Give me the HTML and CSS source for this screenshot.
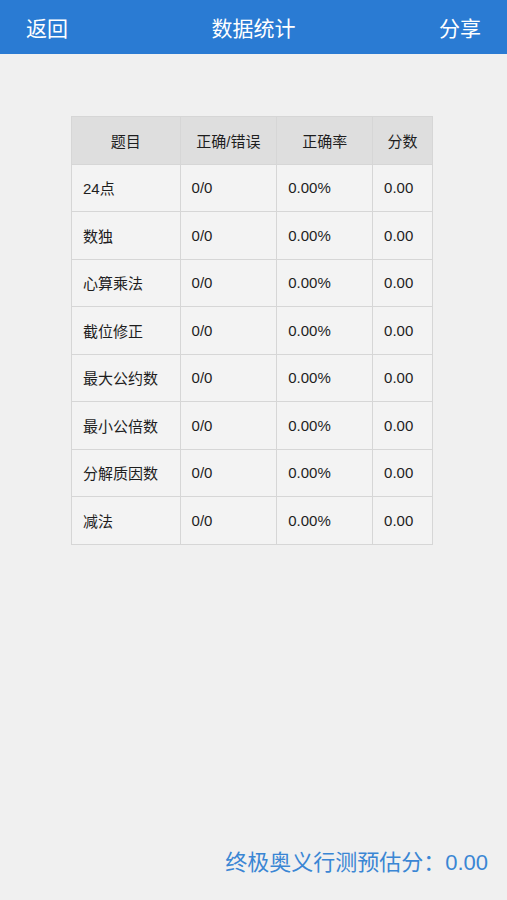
FILE: index.html
```html
<!DOCTYPE html>
<html lang="zh-CN">
  <head>
    <meta charset="UTF-8" />
    <meta name="viewport" content="width=device-width, initial-scale=1.0" />
    <title>数据统计</title>
    <link rel="stylesheet" href="styles.css">
  </head>
  <body>
    <div class="page">
      <header class="navbar">
        <span class="nav-btn">返回</span>
        <h1 class="nav-title">数据统计</h1>
        <span class="nav-btn">分享</span>
      </header>

      <main class="content">
        <table class="stats">
          <thead>
            <tr>
              <th class="col-name">题目</th>
              <th class="col-ratio">正确/错误</th>
              <th class="col-rate">正确率</th>
              <th class="col-score">分数</th>
            </tr>
          </thead>
          <tbody>
            <tr><td>24点</td><td>0/0</td><td>0.00%</td><td>0.00</td></tr>
            <tr><td>数独</td><td>0/0</td><td>0.00%</td><td>0.00</td></tr>
            <tr><td>心算乘法</td><td>0/0</td><td>0.00%</td><td>0.00</td></tr>
            <tr><td>截位修正</td><td>0/0</td><td>0.00%</td><td>0.00</td></tr>
            <tr><td>最大公约数</td><td>0/0</td><td>0.00%</td><td>0.00</td></tr>
            <tr><td>最小公倍数</td><td>0/0</td><td>0.00%</td><td>0.00</td></tr>
            <tr><td>分解质因数</td><td>0/0</td><td>0.00%</td><td>0.00</td></tr>
            <tr><td>减法</td><td>0/0</td><td>0.00%</td><td>0.00</td></tr>
          </tbody>
        </table>
      </main>

      <footer class="summary">终极奥义行测预估分：0.00</footer>
    </div>
  </body>
</html>
```

FILE: styles.css
```css
* {
  box-sizing: border-box;
}

body {
  margin: 0;
  padding: 0;
  background-color: #f0f0f0;
  font-family: "Liberation Sans", "Noto Sans CJK SC", sans-serif;
  color: #1e1e1e;
}

.page {
  display: flex;
  flex-direction: column;
  height: 900px;
}

.navbar {
  display: flex;
  align-items: center;
  justify-content: space-between;
  height: 54px;
  padding: 0 26px;
  background-color: #2a7bd3;
  color: #fff;
}

.nav-btn {
  font-size: 21px;
}

.nav-title {
  margin: 0;
  font-size: 21px;
  font-weight: normal;
}

.content {
  flex: 1;
  padding-top: 62px;
}

.stats {
  margin-left: 71px;
  width: 362px;
  border-collapse: collapse;
  font-size: 15px;
}

.stats th,
.stats td {
  height: 47.5px;
  padding: 0 0 0 11px;
  border: 1px solid #d6d6d6;
  text-align: left;
  font-weight: normal;
}

.stats th {
  background-color: #dedede;
  text-align: center;
  padding: 0;
}

.stats td {
  background-color: #f3f3f3;
}

.col-name {
  width: 109px;
}

.col-ratio {
  width: 97px;
}

.col-rate {
  width: 96px;
}

.col-score {
  width: 60px;
}

.summary {
  padding: 0 19px 26px 0;
  line-height: 22px;
  text-align: right;
  font-size: 22px;
  color: #3a86d4;
}
```
